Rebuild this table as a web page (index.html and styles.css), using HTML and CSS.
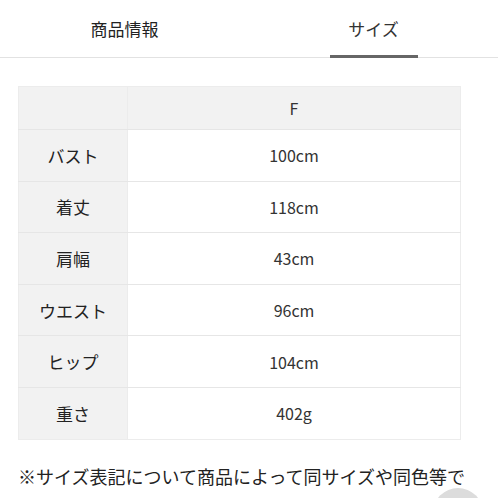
FILE: index.html
```html
<!DOCTYPE html>
<html lang="ja">
<head>
<meta charset="utf-8">
<link rel="stylesheet" href="styles.css">
</head>
<body>
<div class="tabs">
  <div class="tab">商品情報</div>
  <div class="tab active"><span class="tab-label">サイズ</span></div>
</div>
<div class="content">
  <table class="size-table">
    <tr class="head"><th></th><td>F</td></tr>
    <tr><th>バスト</th><td>100cm</td></tr>
    <tr><th>着丈</th><td>118cm</td></tr>
    <tr><th>肩幅</th><td>43cm</td></tr>
    <tr><th>ウエスト</th><td>96cm</td></tr>
    <tr><th>ヒップ</th><td>104cm</td></tr>
    <tr><th>重さ</th><td>402g</td></tr>
  </table>
  <p class="note">※サイズ表記について商品によって同サイズや同色等で</p>
</div>
<div class="fab"></div>
</body>
</html>
```
FILE: styles.css
```css
html, body {
  margin: 0;
  padding: 0;
  background: #fff;
  overflow: hidden;
  height: 498px;
}
body {
  font-family: "Noto Sans CJK JP", "Noto Sans", sans-serif;
  color: #222;
  position: relative;
}
.tabs {
  display: flex;
  height: 57px;
  border-bottom: 1px solid #e2e2e2;
}
.tab {
  flex: 1;
  display: flex;
  justify-content: center;
  align-items: center;
  font-size: 17px;
  padding-bottom: 0;
  box-sizing: border-box;
  position: relative;
}
.tab.active {
  color: #333;
}
.tab.active::after {
  content: "";
  position: absolute;
  left: 50%;
  bottom: -1px;
  width: 88px;
  margin-left: -44px;
  height: 3px;
  background: #666;
}
.content {
  padding: 28px 37px 0 18px;
}
.size-table {
  width: 100%;
  border-collapse: collapse;
  border: 1px solid #ececec;
}
.size-table th {
  width: 108px;
  background: #f2f2f2;
  font-weight: normal;
  font-size: 17px;
  color: #222;
  border-bottom: 1px solid #e6e6e6;
  border-right: 1px solid #ececec;
  height: 50.6px;
  padding: 0;
}
.size-table td {
  text-align: center;
  font-size: 16px;
  color: #333;
  border-bottom: 1px solid #e6e6e6;
  height: 50.6px;
  padding: 0;
}
.size-table tr.head th,
.size-table tr.head td {
  background: #f2f2f2;
  height: 42px;
  padding-bottom: 0;
}
.size-table tr:last-child th,
.size-table tr:last-child td {
  border-bottom: none;
}
.note {
  margin: 23px 0 0 0;
  font-size: 18px;
  color: #222;
  white-space: nowrap;
  letter-spacing: 0;
}
.fab {
  position: absolute;
  left: 433px;
  top: 488px;
  width: 50px;
  height: 50px;
  border-radius: 50%;
  background: #dcdcdc;
}
```
